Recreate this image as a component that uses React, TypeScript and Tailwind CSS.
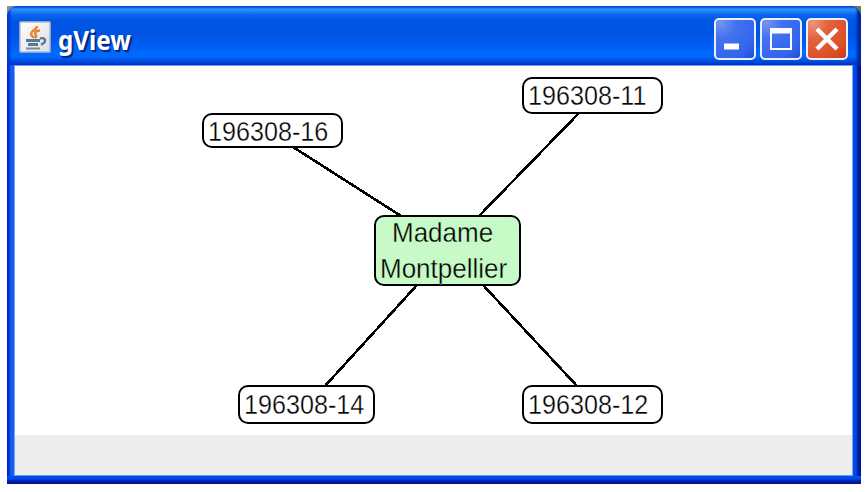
import type { ReactNode } from "react";

type NodeProps = { box: string; lines: { text: string; place: string }[] };

function GraphNode({ box, lines }: NodeProps) {
  return (
    <div className={`absolute rounded-[10px] border-2 border-black ${box}`}>
      {lines.map((l) => (
        <span
          key={l.text}
          className={`absolute origin-left whitespace-nowrap leading-[30px] text-black ${l.place}`}
        >
          {l.text}
        </span>
      ))}
    </div>
  );
}

const digits = "left-[4px] text-[27.5px] scale-x-[0.915] [-webkit-text-stroke:0.35px_#fff]";
const words = "text-[27.5px] scale-x-[0.945] [-webkit-text-stroke:0.35px_#c8fac8]";

const nodes: NodeProps[] = [
  { box: "left-[187px] top-[47px] h-[35px] w-[141px] bg-white", lines: [{ text: "196308-16", place: `${digits} top-[2px]` }] },
  { box: "left-[507px] top-[11px] h-[37px] w-[141px] bg-white", lines: [{ text: "196308-11", place: `${digits} top-[2px]` }] },
  { box: "left-[223px] top-[319px] h-[39px] w-[137px] bg-white", lines: [{ text: "196308-14", place: `${digits} top-[3px]` }] },
  { box: "left-[507px] top-[319px] h-[39px] w-[141px] bg-white", lines: [{ text: "196308-12", place: `${digits} top-[3px]` }] },
  {
    box: "left-[359px] top-[149px] h-[71px] w-[147px] bg-[#c8fac8]",
    lines: [
      { text: "Madame", place: `left-[16px] top-[1px] ${words}` },
      { text: "Montpellier", place: `left-[4px] top-[37px] ${words}` },
    ],
  },
];

function JavaIcon() {
  return (
    <svg width="32" height="32" viewBox="0 0 32 32" className="shrink-0">
      <defs>
        <linearGradient id="tile" x1="0" y1="0" x2="1" y2="1">
          <stop offset="0" stopColor="#fff" />
          <stop offset="1" stopColor="#dcdde0" />
        </linearGradient>
      </defs>
      <rect x="0.75" y="0.75" width="30.5" height="30.5" rx="1" fill="url(#tile)" stroke="#8da4c5" strokeWidth="1.5" />
      <path d="M18 5c0 4-6 4-6 8 0 2 2 2 3 4M21 9.500c-4 0-6 2-4 4.500.500 1 0 2-1 3" fill="none" stroke="#e88632" strokeWidth="2.6" />
      <path d="M7 19.500h14M9 23.500h10" fill="none" stroke="#567a93" strokeWidth="2.8" />
      <path d="M7 27.500h14" fill="none" stroke="#6f8ea2" strokeWidth="2" />
      <path d="M21 17.500c6-2 7 4 1 6" fill="none" stroke="#567a93" strokeWidth="2.4" />
    </svg>
  );
}

function CaptionButton({ label, tone, children }: { label: string; tone: string; children: ReactNode }) {
  return (
    <button
      aria-label={label}
      className={`h-[42px] w-[42px] shrink-0 rounded-[5px] border-2 border-[#e8effd] ${tone}`}
    >
      <svg width="38" height="38" viewBox="0 0 38 38">{children}</svg>
    </button>
  );
}

const blue = "bg-[radial-gradient(circle_at_12%_8%,#7695f3_0%,#4572ee_30%,#3265ee_75%,#2150d0_100%)]";
const red = "bg-[radial-gradient(circle_at_12%_8%,#ec9580_0%,#e2633f_32%,#de4e26_75%,#c43c18_100%)]";

export default function App() {
  return (
    <div className="h-[492px] w-[867px] overflow-hidden bg-white pl-[7px] pt-[6px] font-['Liberation_Sans',sans-serif]">
      <div className="h-[478px] w-[854px] bg-[linear-gradient(to_right,#8b918d_50%,#777957_50%)]">
        <div className="flex h-full w-full flex-col overflow-hidden rounded-t-[11px] bg-[#0831d9]">
          <header className="flex h-[59px] w-full shrink-0 items-start bg-[linear-gradient(to_bottom,#0058e6_0px,#3191ff_3px,#2586fa_5px,#0865ee_9px,#0056e4_15px,#0054e3_28px,#005df4_39px,#006aff_47px,#0066fc_51px,#0048d6_56px,#003dd7_59px)] pl-[12px] pr-[13px] pt-[12px] shadow-[inset_3px_0_3px_#0038d1,inset_-4px_0_3px_#0025a5]">
            <div className="mt-[3px] flex">
              <JavaIcon />
            </div>
            <h1 className="ml-[7px] w-[80px] origin-left scale-x-[0.93] whitespace-nowrap pt-[4px] font-['Noto_Sans',sans-serif] text-[26px] font-bold leading-[36px] text-white [text-shadow:2px_2px_1px_#062582]">
              gView
            </h1>
            <div className="ml-auto flex gap-[4px]">
              <CaptionButton label="Minimize" tone={blue}>
                <path d="M8 23.500h15v6H8z" fill="#fff" />
              </CaptionButton>
              <CaptionButton label="Maximize" tone={blue}>
                <path d="M8 8h22v22H8zM10 13.500v14.500h18V13.500z" fill="#fff" fillRule="evenodd" />
              </CaptionButton>
              <CaptionButton label="Close" tone={red}>
                <path d="M9 9l20 20M29 9L9 29" stroke="#fff" strokeWidth="4.5" />
              </CaptionButton>
            </div>
          </header>
          <div className="flex min-h-0 grow">
            <div className="w-[8px] shrink-0 bg-[linear-gradient(to_right,#001bd0_0px,#0831d9_2px,#1661ed_4px,#105cee_7px,#7ba4f2_7px,#7ba4f2_8px)]" />
            <div className="flex min-w-0 grow flex-col">
              <main className="relative h-[370px] shrink-0 border-t border-[#709be9] bg-white">
                <svg width="837" height="369" className="absolute left-0 top-0" shapeRendering="crispEdges">
                  <path
                    d="M278 81L386 150M564 47L464 150M402 219L310 320M468 219L562 320"
                    fill="none"
                    stroke="#000"
                    strokeWidth="2.6"
                  />
                </svg>
                {nodes.map((n) => (
                  <GraphNode key={n.box} {...n} />
                ))}
              </main>
              <footer className="min-h-0 grow border-b border-[#7197df] bg-[#ededed]" />
            </div>
            <div className="w-[9px] shrink-0 bg-[linear-gradient(to_right,#7ba4f2_0px,#7ba4f2_1px,#0050f0_1px,#0044e0_4px,#001ca2_6px,#00138c_9px)]" />
          </div>
          <div className="h-[8px] shrink-0 bg-[linear-gradient(to_bottom,#0050ee_0px,#0046e4_3px,#0020aa_5px,#00138c_8px)]" />
        </div>
      </div>
    </div>
  );
}
